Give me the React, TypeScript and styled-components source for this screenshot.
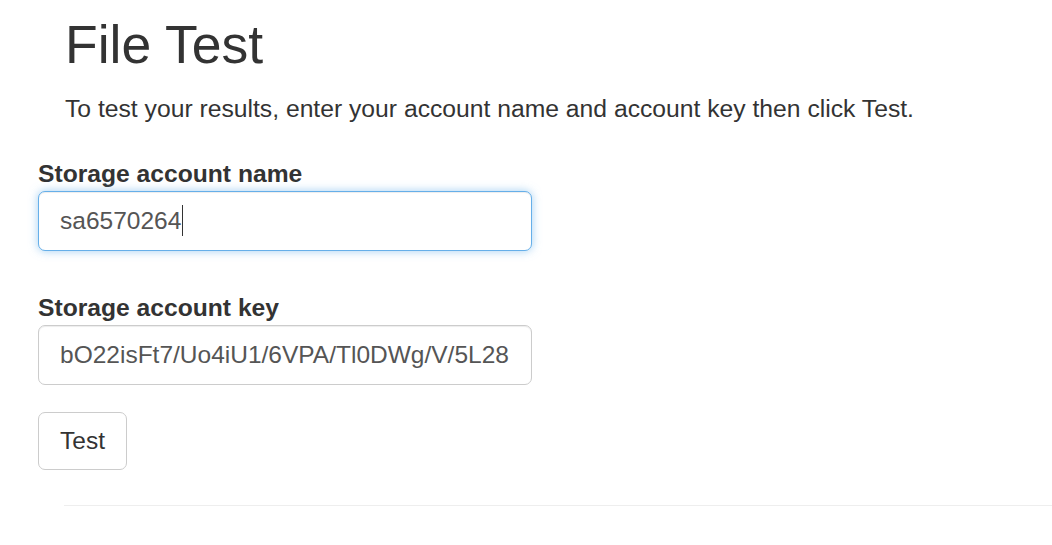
import React from "react";
import styled, { createGlobalStyle, css } from "styled-components";

const Global = createGlobalStyle`
  html, body { margin: 0; padding: 0; background: #fff; }
  body {
    font-family: "Liberation Sans", Arial, Helvetica, sans-serif;
    font-size: 24.5px;
    line-height: 1.42857;
    color: #333;
  }
  * { box-sizing: border-box; }
`;

const Page = styled.div`
  width: 1052px;
  height: 545px;
  overflow: hidden;
  padding: 0 0 0 38px;
`;

const Intro = styled.div`
  padding-left: 27px;
`;

const Title = styled.h1`
  margin: 15px 0 18px;
  font-size: 53.5px;
  font-weight: 500;
  line-height: 59px;
  color: #333;
`;

const Lead = styled.p`
  margin: 0 0 31px;
  font-size: 24.7px;
  line-height: 34px;
  white-space: nowrap;
`;

const Form = styled.form`
  display: flex;
  flex-direction: column;
  align-items: flex-start;
`;

const Group = styled.div<{ $gap: number }>`
  display: flex;
  flex-direction: column;
  margin-bottom: ${(p) => p.$gap}px;
`;

const Label = styled.label`
  font-weight: 700;
  font-size: 24.65px;
  line-height: 34px;
  margin: 0;
`;

const Field = styled.div`
  position: relative;
  width: 494px;
`;

const Input = styled.input<{ $focused?: boolean }>`
  display: block;
  width: 494px;
  height: 60px;
  padding: 0 21px;
  font-family: "Liberation Sans", Arial, Helvetica, sans-serif;
  font-size: 24.5px;
  color: #555;
  background: #fff;
  border: 1px solid #ccc;
  border-radius: 7px;
  box-shadow: inset 0 1px 1px rgba(0, 0, 0, 0.075);
  outline: none;
  ${(p) =>
    p.$focused &&
    css`
      border-color: #66afe9;
      box-shadow: inset 0 1px 1px rgba(0, 0, 0, 0.075), 0 0 10px rgba(102, 175, 233, 0.6);
    `}
`;

const Caret = styled.span`
  position: absolute;
  left: 144px;
  top: 14px;
  width: 1px;
  height: 31px;
  background: #333;
`;

const Button = styled.button`
  height: 58px;
  padding: 0 21px;
  font-family: "Liberation Sans", Arial, Helvetica, sans-serif;
  font-size: 24.5px;
  color: #333;
  background: #fff;
  border: 1px solid #ccc;
  border-radius: 7px;
  cursor: pointer;
`;

const Rule = styled.hr`
  margin: 35px 0 0 26px;
  border: 0;
  border-top: 1px solid #eee;
`;

export default function App() {
  return (
    <>
      <Global />
      <Page>
        <Intro>
          <Title>File Test</Title>
          <Lead>To test your results, enter your account name and account key then click Test.</Lead>
        </Intro>
        <Form onSubmit={(e) => e.preventDefault()}>
          <Group $gap={40}>
            <Label>Storage account name</Label>
            <Field>
              <Input $focused value="sa6570264" readOnly />
              <Caret />
            </Field>
          </Group>
          <Group $gap={27}>
            <Label>Storage account key</Label>
            <Field>
              <Input value="bO22isFt7/Uo4iU1/6VPA/Tl0DWg/V/5L28kx9Yv" readOnly />
            </Field>
          </Group>
          <Button type="submit">Test</Button>
        </Form>
        <Rule />
      </Page>
    </>
  );
}
